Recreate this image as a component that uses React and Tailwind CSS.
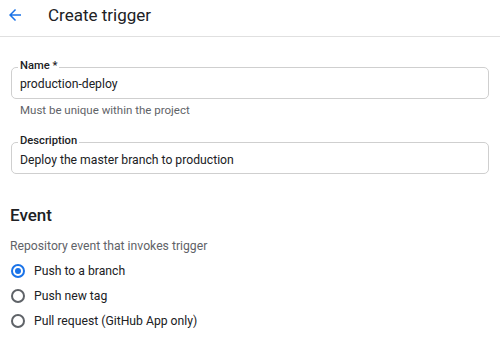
const Field = ({ label, value, helper }) => (
  <div>
    <div className="relative rounded-[5px] border border-[#cfcfcf] h-[32px] flex items-center px-[8px]">
      <span className="absolute left-[6px] top-[-9px] bg-white px-[2px] text-[11.2px] font-medium text-[#202124] leading-[14px]">
        {label}
      </span>
      <span className="text-[12.2px] text-[#202124] pt-[3px]">{value}</span>
    </div>
    {helper && <p className="text-[11.5px] text-[#5f6368] mt-[3px] ml-[9px]">{helper}</p>}
  </div>
);

const Radio = ({ checked, label }) => (
  <label className="flex items-center gap-[9px] h-[25px]">
    <span
      className={
        checked
          ? 'w-[14px] h-[14px] ml-[1px] rounded-full border-2 border-[#1a73e8] flex items-center justify-center'
          : 'w-[14px] h-[14px] ml-[1px] rounded-full border-2 border-[#5f6368]'
      }
    >
      {checked && <span className="w-[6px] h-[6px] rounded-full bg-[#1a73e8]" />}
    </span>
    <span className="text-[12.2px] text-[#202124]">{label}</span>
  </label>
);

export default function App() {
  return (
    <div className="w-[500px] h-[338px] bg-white overflow-hidden font-['Roboto',sans-serif]">
      {/* header */}
      <div className="h-[37px] border-b border-[#e0e0e0] flex items-center pb-[6px]">
        <svg className="ml-[6px]" width="18" height="18" viewBox="0 0 24 24" fill="#1a73e8">
          <path d="M20 11H7.83l5.59-5.59L12 4l-8 8 8 8 1.41-1.41L7.83 13H20v-2z" />
        </svg>
        <h1 className="ml-[24px] text-[17px] text-[#202124] leading-none">Create trigger</h1>
      </div>

      <div className="px-[11px] pt-[30px] flex flex-col">
        <Field label="Name *" value="production-deploy" helper="Must be unique within the project" />
        <div className="mt-[23px]">
          <Field label="Description" value="Deploy the master branch to production" />
        </div>
      </div>

      <div className="px-[10px] mt-[33px]">
        <h2 className="text-[17px] font-medium text-[#202124] leading-none">Event</h2>
        <p className="text-[12.2px] text-[#5f6368] mt-[13px]">Repository event that invokes trigger</p>
        <div className="mt-[3px] flex flex-col">
          <Radio checked label="Push to a branch" />
          <Radio label="Push new tag" />
          <Radio label="Pull request (GitHub App only)" />
        </div>
      </div>
    </div>
  );
}
